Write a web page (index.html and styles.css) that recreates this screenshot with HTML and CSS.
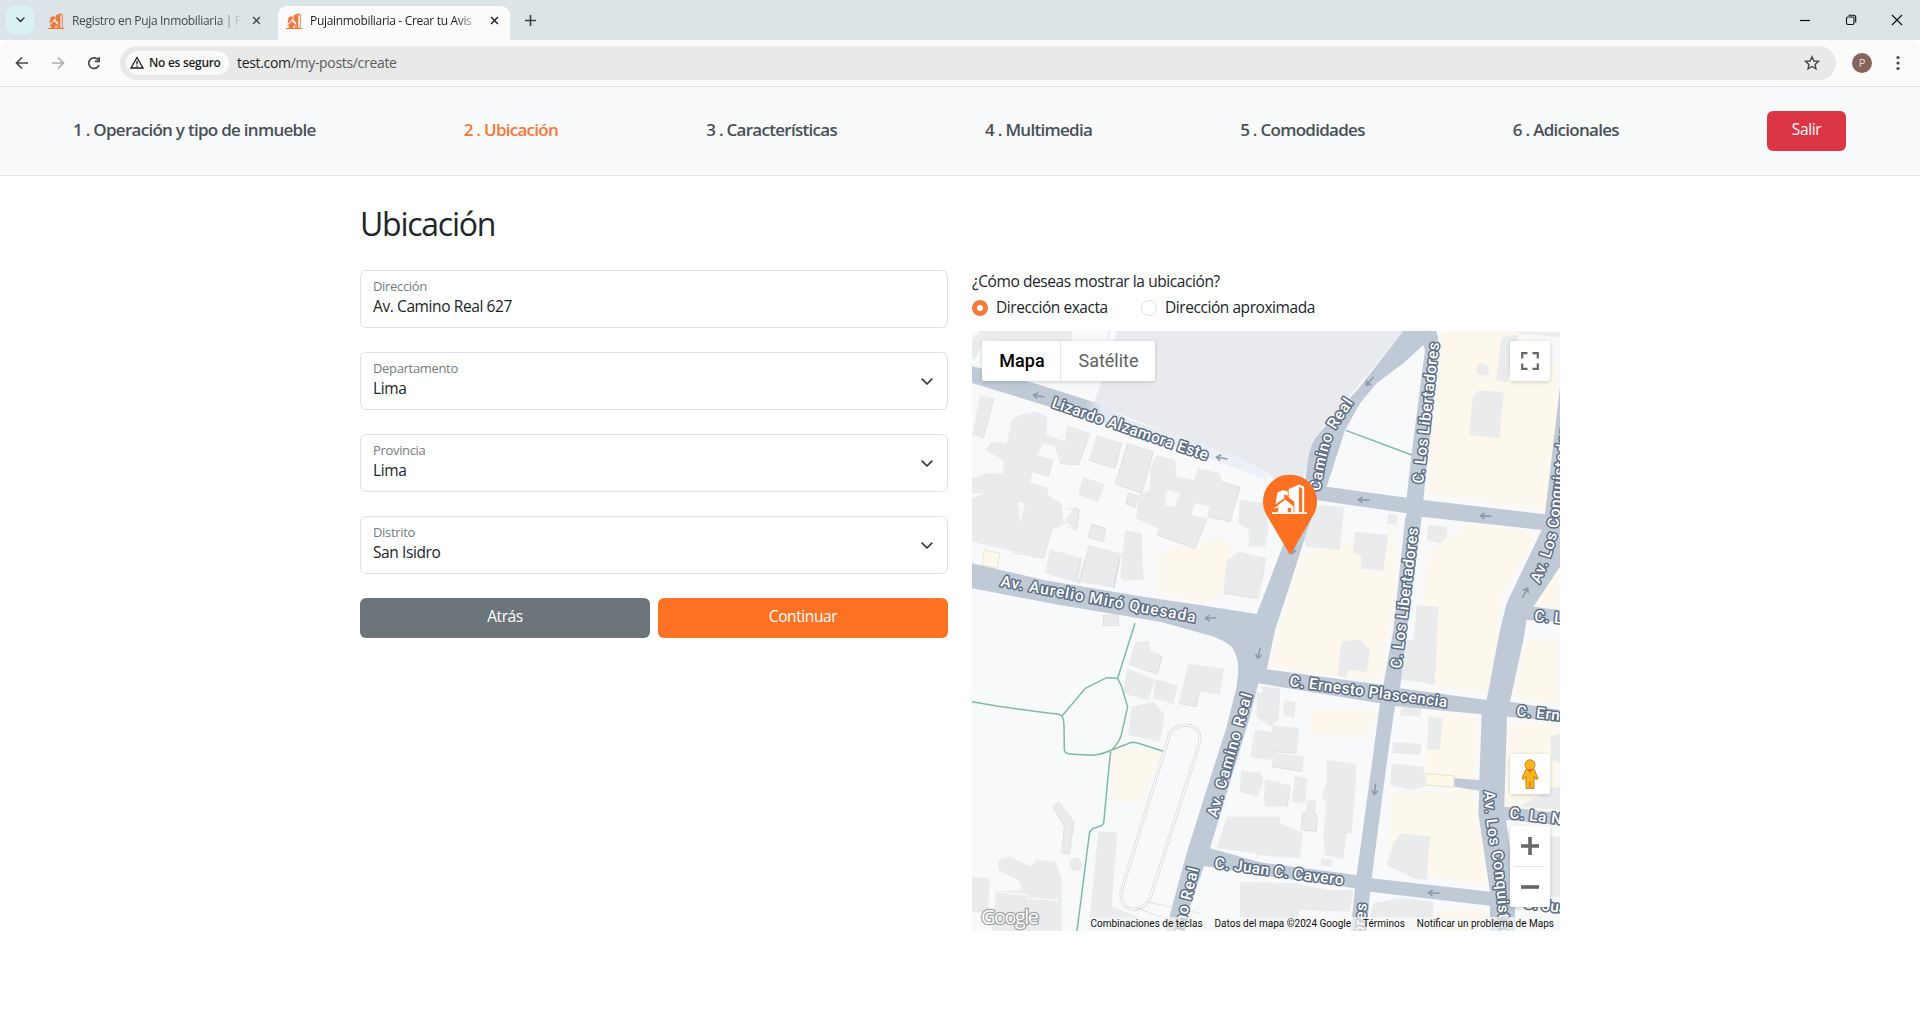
FILE: index.html
```html
<!DOCTYPE html>
<html lang="es">
<head>
<meta charset="utf-8">
<title>Pujainmobiliaria - Crear tu Aviso</title>
<link rel="stylesheet" href="styles.css">
</head>
<body>
<svg class="defs" width="0" height="0">
  <symbol id="logo" viewBox="0 0 16 16" preserveAspectRatio="none">
    <path d="M7.600 2.600 12.500.3 14.700 1.500V15.500H13.800V2.500L12.300 1.500V15.500H10.200V9.500L7.600 7z"/>
    <path d="M2.500 4.500 5 3.200 7.200 4V6.200L5.600 5.400V7.600L1.600 10.800z"/>
    <path d="M.7 13.200 6 8.200 9.800 11.800V15.200H8.700V12.800H7.200v2.400H2.600L3 12.400z"/>
    <path d="M0 15H16V16H0z"/>
  </symbol>
  <symbol id="x" viewBox="0 0 10 10"><path d="M1.200 1.200 8.800 8.800M8.800 1.200 1.200 8.800" fill="none" stroke="currentColor" stroke-width="1.600"/></symbol>
  <symbol id="chev" viewBox="0 0 12 8"><path d="M1.200 1.200 6 6 10.800 1.200" fill="none" stroke="currentColor" stroke-width="1.700" stroke-linecap="round" stroke-linejoin="round"/></symbol>
</svg>

<header class="browser">
  <div class="tabs">
    <div class="tab-search"><svg width="9" height="6"><use href="#chev"/></svg></div>
    <div class="tab">
      <svg class="favicon" width="16" height="16"><use href="#logo"/></svg>
      <span class="tab-title">Registro en Puja Inmobiliaria | P</span>
      <svg width="9" height="9"><use href="#x"/></svg>
    </div>
    <div class="tab tab-active">
      <svg class="favicon" width="16" height="16"><use href="#logo"/></svg>
      <span class="tab-title">Pujainmobiliaria - Crear tu Avis</span>
      <svg width="9" height="9"><use href="#x"/></svg>
    </div>
    <svg class="plus" width="11" height="11" viewBox="0 0 11 11"><path d="M5.500 0v11M0 5.500h11" stroke="#3c4043" stroke-width="1.600"/></svg>
    <div class="window-buttons">
      <svg width="12" height="12" viewBox="0 0 12 12"><path d="M1 6.500h10" stroke="#111" stroke-width="1.200"/></svg>
      <svg width="12" height="12" viewBox="0 0 12 12" fill="none" stroke="#111" stroke-width="1.100"><rect x="1.500" y="3" width="7.500" height="7.500" rx="1.500"/><path d="M3.500 1.300H8.500Q10.700 1.300 10.700 3.500V8.500"/></svg>
      <svg width="12" height="12" viewBox="0 0 12 12"><path d="M1 1 11 11M11 1 1 11" stroke="#111" stroke-width="1.200"/></svg>
    </div>
  </div>
  <div class="toolbar">
    <svg class="nav-icon" width="14" height="14" viewBox="0 0 14 14"><path d="M13 7H2M7 1.500 1.500 7 7 12.500" fill="none" stroke="#474747" stroke-width="1.700"/></svg>
    <svg class="nav-icon" width="14" height="14" viewBox="0 0 14 14"><path d="M1 7h11M7 1.500 12.500 7 7 12.500" fill="none" stroke="#b0b0b0" stroke-width="1.700"/></svg>
    <svg class="nav-icon" width="14" height="14" viewBox="0 0 14 14"><path d="M12 9A5.300 5.300 0 1 1 11.500 4.300" fill="none" stroke="#474747" stroke-width="1.700"/><path d="M13 1v5.200H7.800V4.600h3.600V1z" fill="#474747"/></svg>
    <div class="omnibox">
      <div class="chip">
        <svg width="14" height="13" viewBox="0 0 14 13"><path d="M7 1.500 13 12H1z" fill="none" stroke="#1f1f1f" stroke-width="1.300"/><path d="M7 5v3.500M7 9.500v1.300" stroke="#1f1f1f" stroke-width="1.300"/></svg>
        <span>No es seguro</span>
      </div>
      <span class="url">test.com<span class="path">/my-posts/create</span></span>
      <svg class="star" width="16" height="16" viewBox="0 0 16 16"><path d="M8 1.800 9.900 6l4.500.4-3.400 3 1 4.500L8 11.500 4 13.900l1-4.500-3.400-3L6.100 6z" fill="none" stroke="#474747" stroke-width="1.400"/></svg>
    </div>
    <div class="avatar">P</div>
    <svg class="dots" width="4" height="16" viewBox="0 0 4 16" fill="#474747"><circle cx="2" cy="2.500" r="1.600"/><circle cx="2" cy="8" r="1.600"/><circle cx="2" cy="13.500" r="1.600"/></svg>
  </div>
</header>

<nav class="steps">
  <a>1 . Operación y tipo de inmueble</a>
  <a class="current">2 . Ubicación</a>
  <a>3 . Características</a>
  <a>4 . Multimedia</a>
  <a>5 . Comodidades</a>
  <a>6 . Adicionales</a>
  <button class="btn btn-exit">Salir</button>
</nav>

<main class="content">
  <h1>Ubicación</h1>
  <div class="columns">
    <form class="form">
      <div class="field"><div><label>Dirección</label><p>Av. Camino Real 627</p></div></div>
      <div class="field"><div><label>Departamento</label><p>Lima</p></div><svg width="12" height="8"><use href="#chev"/></svg></div>
      <div class="field"><div><label>Provincia</label><p>Lima</p></div><svg width="12" height="8"><use href="#chev"/></svg></div>
      <div class="field"><div><label>Distrito</label><p>San Isidro</p></div><svg width="12" height="8"><use href="#chev"/></svg></div>
      <div class="actions">
        <button type="button" class="btn btn-back">Atrás</button>
        <button type="button" class="btn btn-next">Continuar</button>
      </div>
    </form>
    <section class="location">
      <p class="question">¿Cómo deseas mostrar la ubicación?</p>
      <div class="radios">
        <span class="radio on"></span><span class="r1">Dirección exacta</span>
        <span class="radio"></span><span class="r2">Dirección aproximada</span>
      </div>
      <div class="map">
        <svg class="map-canvas" width="588" height="600" viewBox="972 331 588 600">
          <defs>
            <linearGradient id="fade"><stop offset="0" stop-color="#bfcad6"/><stop offset=".38" stop-color="#bfcad6"/><stop offset=".44" stop-color="#e4eaf3"/><stop offset="1" stop-color="#eef1f7"/></linearGradient>
            <filter id="soft"><feGaussianBlur stdDeviation="7"/></filter>
            <path id="arrow" d="M5.500 0H-5.500M-1.500-3-5.500 0-1.500 3" fill="none" stroke="#8d99a9" stroke-width="1.600"/>
          </defs>
          <rect x="972" y="331" width="588" height="600" fill="#f8f9fa"/>

          <!-- commercial areas -->
          <g fill="#fdf8ed" filter="url(#soft)" transform="translate(1260 320) scale(.33333)">
            <path d="M545 20 760 20 900 150 880 570 500 520zM120 700 400 640 410 780 360 1080 30 1040zM510 690 640 610 830 640 720 830 700 1120 470 1090 480 900z"/>
            <path d="M830 820 900 740V860H820zM800 960H900V1150L760 1130zM745 1210H900V1480H735zM160 1170H350L320 1250 150 1240z"/>
            <path d="M500 1180 650 1190 645 1380H500zM395 1420 645 1400 680 1700 380 1640zM530 1770H680V1840H520z"/>
          </g>
          <g fill="#fdf8ed" transform="translate(960 260) scale(.33333)">
            <path d="M595 880 780 830 830 890 790 1010 720 1030 590 990z" filter="url(#soft)"/>
            <path d="M455 1460 605 1470 545 1630 455 1620z" filter="url(#soft)"/>
            <path d="M72 870 120 880 112 925 66 915z" stroke="#e6dcbb" stroke-width="2"/>
          </g>

          <!-- blocks and buildings: north west -->
          <g fill="#e9ebed" transform="translate(960 260) scale(.33333)">
            <path d="M470 213H1330L1060 540 1020 700 920 640 700 550 400 430 435 340z" fill="#e8eaee"/>
            <path d="M60 213H335V245H180L70 240 45 300 36 290V240z"/>
            <path d="M60 405 102 415 70 535 36 525zM180 465 225 455 262 470 260 525 315 545 320 495 390 520 355 615 300 610 285 560 250 550 232 585 278 600 265 648 220 635 210 665 265 685 262 705 305 730 310 790 345 740 358 750 350 810 320 790 275 810 250 895 36 845V715L70 700 36 700V655L80 640 130 640 130 600 75 570 95 545 140 550 155 480z"/>
            <path d="M410 525 485 548 465 625 385 600zM502 552 580 575 545 700 466 672zM368 650 432 672 415 728 355 705zM505 700 532 708 525 742 498 732zM395 793 437 805 430 845 385 832z"/>
            <path d="M590 585 645 600 650 650 700 660 715 625 780 640 785 665 840 682 810 785 745 770 740 780 705 865 590 825 595 805 528 775 535 705 570 690 570 625zM840 720 925 730 920 800 910 860 865 860 870 810 835 790zM495 810 545 820 550 960 480 955zM270 868 365 895 355 970 255 940zM385 855 482 880 465 985 355 965zM840 875 920 895 890 1015 790 1000 800 900z"/>
            <path d="M620 690 660 700 645 740 615 735zM705 730 750 740 740 775 695 765zM175 725 195 730 180 790z" fill="#f8f9fa"/>
          </g>
          <g fill="none" stroke="#d5d8dc" stroke-width="2" transform="translate(960 260) scale(.33333)">
            <path d="M502 552 580 575 545 700 466 672zM102 415 70 535M390 520 355 615 300 610M485 548 465 625 385 600M785 665 840 682 810 785 745 770M740 780 705 865 590 825M395 793 437 805 430 845 385 832zM320 745 358 750 350 810 320 800M505 700 532 708 525 742 498 732zM278 600 265 648 220 635M275 810 250 895 160 878M365 895 345 960M482 880 460 985M450 213 440 240"/>
          </g>

          <!-- buildings: north east -->
          <g fill="#e9ebed" transform="translate(1260 320) scale(.33333)">
            <path d="M655 212 732 215 718 355 627 345 638 235zM725 52 775 45 740 188 708 180zM650 145Q655 125 672 132 692 140 685 162 665 172 650 160zM765 36 900 38V52L775 40z"/>
            <path d="M180 555 252 562 240 690 140 680 130 650 150 570zM285 635 385 645 370 752 302 745 305 705 278 700zM385 580 415 585 410 615 380 610zM505 615 560 620 562 650 540 670 500 660zM470 855 535 860 525 1090 420 1080 440 960 460 960zM-40 590 20 580 25 630 15 680-30 670zM0 710 18 715 8 780-20 770z"/>
          </g>

          <!-- blocks, paths and buildings: south west -->
          <g fill="#e9ebed" transform="translate(960 560) scale(.33333)">
            <path d="M490 0H545L552 60 488 62zM430 165 476 168 475 197 430 195zM525 247 567 242 570 270 607 287 592 343 507 312zM500 325 583 360 565 422 490 400zM585 358 652 375 640 432 580 415zM685 312 792 325 780 405 718 395 708 440 655 430zM515 440 580 425 615 465 600 545 505 525z"/>
            <path d="M295 725 342 785 328 882 305 878 313 800 278 740zM330 900Q350 880 368 910 365 935 340 933 325 925 330 900zM415 815H472L455 1040 560 1080 600 1113H385zM115 900 150 890 210 920 230 900 285 905 305 950 305 1113H95L105 995 185 990 180 965 115 930zM36 950 90 955 85 1060 36 1055z"/>
            <path d="M890 975 960 970V1060L890 1050z"/>
            <path d="M905 380 960 385V430L915 425zM885 510 960 520V570L930 600 870 590zM845 630 905 640 895 710 838 695zM915 660 960 665V740H915zM800 770 960 770V890L770 865z"/>
            <path d="M105 1000 100 1060M105 995 205 1005V1015L295 1020" fill="none" stroke="#f8f9fa" stroke-width="4"/>
            <path d="M295 725 342 785 328 882 305 878 313 800 278 740zM507 312 592 343 607 287M430 165H476V197H430zM355 80 375 0M460 85 480 0M910 30 895 115 790 100M655 430 708 440 718 395" fill="none" stroke="#d5d8dc" stroke-width="2"/>
          </g>
          <g fill="none" transform="translate(960 560) scale(.33333)">
            <path d="M625 535C635 480 735 480 718 550L575 1000C555 1070 470 1060 485 990z" stroke="#d5d6d8" stroke-width="9"/>
            <path d="M625 535C635 480 735 480 718 550L575 1000C555 1070 470 1060 485 990z" stroke="#f8f9fa" stroke-width="5"/>
            <path d="M560 1025 720 1060M535 1045 650 1090" stroke="#d5d6d8" stroke-width="2"/>
            <path d="M525 190 473 355 440 353 377 384 306 468Q295 460 270 460L110 438 36 425M306 468Q312 480 312 495L313 570Q315 582 330 582L395 586Q425 584 455 570 480 545 485 520L503 440 485 380 473 355M455 570 515 547 530 548 608 573M452 575 446 630 431 790 425 797 398 806 389 815 351 1113" stroke="#7dbca3" stroke-width="4.500"/>
          </g>

          <!-- buildings: south east -->
          <g fill="#e9ebed" transform="translate(1260 620) scale(.33333)">
            <path d="M245 65 300 58 330 90 320 155 265 150 260 175 232 165zM505 90 530 95 522 195 495 190zM425 260 485 265 480 292 420 285zM505 290 548 295 540 390 502 388zM400 365 485 372 480 405 395 400zM395 430 490 440 495 500 450 510 390 495zM-10 215 60 225 55 300 30 320-10 290zM72 240 108 248 102 295 70 285zM35 315 118 325 110 400 40 395zM38 400 132 408 128 455 35 440zM-10 330 30 335 30 415-10 415zM-10 465 10 470 5 510-10 510zM15 485 90 495 82 560 10 550zM105 468 142 475 135 552 95 545zM140 538 166 542 163 580 172 585 168 635 122 630 128 580 138 578z"/>
            <path d="M200 420 290 432 285 520 275 640 260 640 250 718 195 705 190 640 200 550 185 530 200 490zM185 715 218 720 215 740 182 735zM-10 610 50 605 130 640 120 715-10 705zM-60 785 110 790 200 810 280 810 270 875 120 870 100 930H-60zM425 640 512 650 505 700 500 780 460 775 380 735 400 670zM340 850 420 835 520 845V895H400L330 890zM870 350 900 340V430L875 420zM870 505 900 500V570L780 560zM872 650H900V830H872z"/>
            <path d="M498 460 583 468 582 502 495 495z" fill="#fdf8ea" stroke="#dfd6b8" stroke-width="2"/>
            <path d="M166 542 163 580 172 585 168 635 122 630 128 580 138 578M90 495 82 560M128 455 35 440M110 400 40 395" fill="none" stroke="#d5d8dc" stroke-width="2"/>
          </g>

          <!-- roads -->
          <path d="M972 366 1040 385 1100 404 1130 420 1240 458 1268 472 1266 480 1230 466 1150 437 1060 410 972 383z" fill="url(#fade)"/>
          <g fill="#bfcad6" transform="translate(1260 320) scale(.33333)">
            <path d="M430 33H528Q540 60 534 100L520 250 490 540 855 583 900 200V740L820 860 900 870V905L800 900 795 930 790 960 750 1145 900 1170V1205L741 1190 733 1460 900 1480V1515L738 1500 765 1690 765 1833H690V1757L330 1715 320 1833H272L285 1705 0 1665-168 1638-210 1760-232 1833H-282L-260 1745-220 1600-170 1440-100 1220-70 1100-65 1050Q-65 1010-85 980-110 960-145 948L-300 905-600 855-864 805V730L-650 780-350 830-180 855-10 882 60 700 130 520 140 450Q145 390 165 355L300 200zM490 75 430 130 350 190 300 250 255 330 200 500 440 533 455 400 495 90zM170 540 120 700 75 840 45 930 22 1040 20 1048 370 1095 400 930 435 600 440 580zM485 590 445 900 420 1105 680 1140 720 930 740 850 845 630zM-5 1090-30 1190-85 1370-150 1585 0 1627 290 1665 340 1300 360 1150zM405 1158 380 1330 335 1675 690 1715 655 1480 658 1412 583 1400V1375L658 1380 665 1183z" fill-rule="evenodd"/>
            <path d="M258 331 455 405" stroke="#7dbca3" stroke-width="4.500"/>
          </g>
          <g>
            <use href="#arrow" transform="translate(1039 396) rotate(10)"/><use href="#arrow" transform="translate(1222 458) rotate(10)"/>
            <use href="#arrow" transform="translate(1370 381) rotate(-48)"/><use href="#arrow" transform="translate(1364 500) rotate(4)"/>
            <use href="#arrow" transform="translate(1486 516) rotate(4)"/><use href="#arrow" transform="translate(1525 593) rotate(118)"/>
            <use href="#arrow" transform="translate(1211 618) rotate(-2)"/><use href="#arrow" transform="translate(1259 653) rotate(-78)"/>
            <use href="#arrow" transform="translate(1375 789) rotate(-84)"/><use href="#arrow" transform="translate(1434 893) rotate(3)"/>
            <use href="#arrow" transform="translate(1294 548) rotate(-70)"/>
          </g>

          <!-- street names -->
          <path id="p1" d="M1302 560 1320 492Q1325 455 1335 430L1354 402" fill="none"/>
          <path id="p2" d="M1539.500 584Q1556 548 1559 520L1576 370" fill="none"/>
          <path id="p3" d="M1484 791Q1486 830 1493 860 1499 895 1500 960" fill="none"/>
          <g class="street">
            <text transform="translate(1051 407) rotate(19)" textLength="164">Lizardo Alzamora Este</text>
            <text text-anchor="end" letter-spacing=".9"><textPath href="#p1" startOffset="100%">Camino Real</textPath></text>
            <text transform="translate(1423 484) rotate(-83.500)" textLength="142">C. Los Libertadores</text>
            <text transform="translate(1401 669) rotate(-83)" textLength="142">C. Los Libertadores</text>
            <text letter-spacing=".6"><textPath href="#p2">Av. Los Conquistadores</textPath></text>
            <text transform="translate(1000 586) rotate(10.600)" textLength="198">Av. Aurelio Miró Quesada</text>
            <text transform="translate(1289 686) rotate(7.700)" textLength="159">C. Ernesto Plascencia</text>
            <text transform="translate(1516 716) rotate(6)" letter-spacing=".5">C. Ernesto</text>
            <text transform="translate(1534 621) rotate(5)" letter-spacing=".5">C. Lima</text>
            <text transform="translate(1509 818) rotate(7)" letter-spacing=".5">C. La Niña</text>
            <text transform="translate(1217 818) rotate(-74)" textLength="128">Av. Camino Real</text>
            <text transform="translate(1199 868) rotate(-76)" text-anchor="end" letter-spacing=".9">Av. Camino Real</text>
            <text transform="translate(1214 868) rotate(7.600)" textLength="130">C. Juan C. Cavero</text>
            <text letter-spacing=".9"><textPath href="#p3">Av. Los Conquistadores</textPath></text>
            <text transform="translate(1523 908) rotate(7)">C. Juan C.</text>
            <text transform="translate(1367 903) rotate(-84)" text-anchor="end" letter-spacing=".5">C. Los Libertadores</text>
          </g>
          <!-- property marker -->
          <path d="M1290 555 1266 514A27 27 0 1 1 1314 514z" fill="#ff7122"/>
          <use href="#logo" x="1272" y="484" width="35" height="30" fill="#fff"/>
          <text class="google" x="981" y="924" textLength="58">Google</text>
        </svg>
        <div class="map-type"><span class="type-on">Mapa</span><span class="type-off">Satélite</span></div>
        <div class="map-btn fullscreen"><svg width="18" height="18" viewBox="0 0 18 18"><path d="M1.200 6.500V1.200H6.500M11.500 1.200h5.300V6.500M16.800 11.500v5.300H11.500M6.500 16.800H1.200V11.500" fill="none" stroke="#666" stroke-width="2.200"/></svg></div>
        <div class="map-btn pegman"><svg width="18" height="30" viewBox="0 0 18 30"><path d="M5 10H13L17 19.500 15 20.500 13 17V29.500H9.700V23H8.300V29.500H5V17L3 20.500 1 19.500z" fill="#fbb51a" stroke="#c8811c"/><circle cx="9" cy="5.800" r="5" fill="#fbb51a" stroke="#c8811c"/><path d="M6 10.500h6L9 14z" fill="#e5722a"/></svg></div>
        <div class="map-zoom">
          <svg width="18" height="18" viewBox="0 0 18 18"><path d="M9 0V18M0 9H18" stroke="#666" stroke-width="3.600"/></svg>
          <hr>
          <svg width="18" height="18" viewBox="0 0 18 18"><path d="M0 9H18" stroke="#666" stroke-width="3.600"/></svg>
        </div>
        <div class="legal"><span>Combinaciones de teclas</span><span>Datos del mapa ©2024 Google</span><span>Términos</span><span>Notificar un problema de Maps</span></div>
      </div>
    </section>
  </div>
</main>
</body>
</html>
```
FILE: styles.css
```css
* { box-sizing: border-box; }
body { margin: 0; width: 1920px; height: 1032px; overflow: hidden; background: #fff; color: #212529; font-family: "Open Sans", "Noto Sans", sans-serif; }
h1, p { margin: 0; font-weight: 400; }
svg { display: block; flex: none; }
.defs { position: absolute; }

.browser { font-family: "Open Sans", sans-serif; }
.tabs { display: flex; height: 40px; padding: 6px 17px 0 6px; background: #dbe4e6; }
.tab-search { display: grid; place-items: center; width: 28px; height: 28px; margin-right: 4px; border-radius: 9px; background: #daf2f1; color: #1f1f1f; }
.tab { display: flex; align-items: center; width: 240px; height: 34px; padding: 0 17px 5px 10px; font-size: 12px; letter-spacing: -.32px; color: #45494c; }
.tab-active { width: 232px; padding-left: 8px; padding-right: 11px; border-radius: 9px 9px 0 0; background: #fafbfa; color: #1f1f1f; }
.favicon { fill: #f0763a; }
.tab-title { flex: 1; margin: 0 10px 0 8px; overflow: hidden; white-space: nowrap; -webkit-mask-image: linear-gradient(90deg, #000 86%, transparent); mask-image: linear-gradient(90deg, #000 86%, transparent); }
.plus { margin: 9px 0 0 15px; }
.window-buttons { display: flex; gap: 34px; margin: 8px 0 0 auto; }
.toolbar { display: flex; align-items: center; height: 47px; padding: 0 20px 1px 15px; border-bottom: 1px solid #dfe3e5; border-radius: 10px 10px 0 0; background: #fafbfa; }
.nav-icon { margin-right: 22px; }
.omnibox { display: flex; align-items: center; width: 1716px; height: 34px; margin-left: -3px; padding: 0 16px 0 6px; border-radius: 17px; background: #e9e9e9; }
.chip { display: flex; align-items: center; gap: 5px; width: 103px; height: 24px; padding-left: 4px; border-radius: 12px; background: #fafafa; font-size: 12px; font-weight: 600; letter-spacing: -.3px; color: #1f1f1f; white-space: nowrap; }
.url { margin-left: 8px; font-size: 14px; letter-spacing: -.32px; color: #1f1f1f; }
.path { color: #5b5b5b; }
.star { margin-left: auto; }
.avatar { display: grid; place-items: center; width: 20px; height: 20px; margin-left: 16px; border-radius: 50%; background: #84645c; color: #f1dcd4; font-size: 11px; }
.dots { margin-left: 24px; }

.steps { display: flex; align-items: center; justify-content: space-between; height: 89px; padding: 0 74px 0 73px; border-bottom: 1px solid #e3e5e7; background: #f8fafc; font-size: 17px; font-weight: 600; letter-spacing: -.72px; color: #495057; }
.steps a { padding-bottom: 4px; white-space: nowrap; }
.steps .current { color: #f9763a; }
.btn { height: 40px; padding: 0 0 4px; border: 0; border-radius: 6px; color: #fff; font: 400 15.500px "Open Sans", sans-serif; letter-spacing: -.4px; }
.btn-exit { width: 79px; background: #dc3545; }

.content { width: 1200px; margin: 0 auto; }
h1 { height: 94px; padding-top: 25px; font-size: 32px; line-height: 46px; letter-spacing: -1.250px; }
.columns { display: grid; grid-template-columns: 588px 588px; gap: 24px; }
.form { display: flex; flex-direction: column; gap: 24px; }
.field { display: flex; align-items: center; justify-content: space-between; height: 58px; padding: 0 14px 3px 12px; border: 1px solid #dee2e6; border-radius: 6px; }
.field label { display: block; font-size: 13px; line-height: 18px; letter-spacing: -.33px; color: #777c80; }
.field p { font-size: 15.500px; line-height: 23px; letter-spacing: -.4px; }
.field svg { margin-top: 4px; color: #343a40; }
.actions { display: grid; grid-template-columns: 290px 290px; gap: 8px; }
.btn-back { background: #6b757a; }
.btn-next { background: #ff7224; }

.question { height: 24px; font-size: 15.500px; line-height: 22px; letter-spacing: -.42px; }
.radios { display: flex; align-items: center; height: 37px; padding-bottom: 9px; font-size: 15.500px; line-height: 24px; letter-spacing: -.44px; white-space: nowrap; }
.radios span:not(.radio) { margin: -3px 0 0 8px; }
.radio { width: 16px; height: 16px; border: 1px solid #dee2e6; border-radius: 50%; }
.radio.on { border: 5px solid #f5793b; }
.r1 { width: 145px; }

.map { position: relative; width: 588px; height: 600px; overflow: hidden; font-family: Roboto, sans-serif; }
.street text { font: 500 15.500px Roboto, sans-serif; fill: #fff; stroke: #5d6d83; stroke-width: 3px; stroke-linejoin: round; paint-order: stroke; }
.google { font: 400 20px "Open Sans", sans-serif; fill: #fff; stroke: #a2a4a6; stroke-width: 2.500px; paint-order: stroke; }
.map-type { position: absolute; left: 10px; top: 10px; display: flex; height: 40px; background: #fff; border-radius: 2px; box-shadow: 0 1px 4px rgba(0,0,0,.18); font-size: 18px; line-height: 40px; text-align: center; color: #616161; }
.type-on { width: 79px; padding-left: 2px; border-right: 1px solid #e8e8e8; font-weight: 500; color: #000; }
.type-off { width: 94px; padding-left: 1px; }
.map-btn, .map-zoom { position: absolute; right: 10px; width: 40px; background: #fff; border-radius: 2px; box-shadow: 0 1px 4px rgba(0,0,0,.18); }
.map-btn { display: grid; place-items: center; height: 40px; }
.fullscreen { top: 10px; }
.pegman { top: 423px; }
.map-zoom { display: flex; flex-direction: column; align-items: center; justify-content: space-between; top: 495px; height: 81px; padding: 11px 0; }
.map-zoom hr { width: 32px; height: 1px; margin: 0; border: 0; background: #e6e6e6; }
.legal { position: absolute; right: 0; bottom: 0; display: flex; gap: 12px; height: 14px; padding: 0 6px; background: rgba(247,247,247,.72); font-size: 10px; line-height: 14px; color: #111; white-space: nowrap; }
```
